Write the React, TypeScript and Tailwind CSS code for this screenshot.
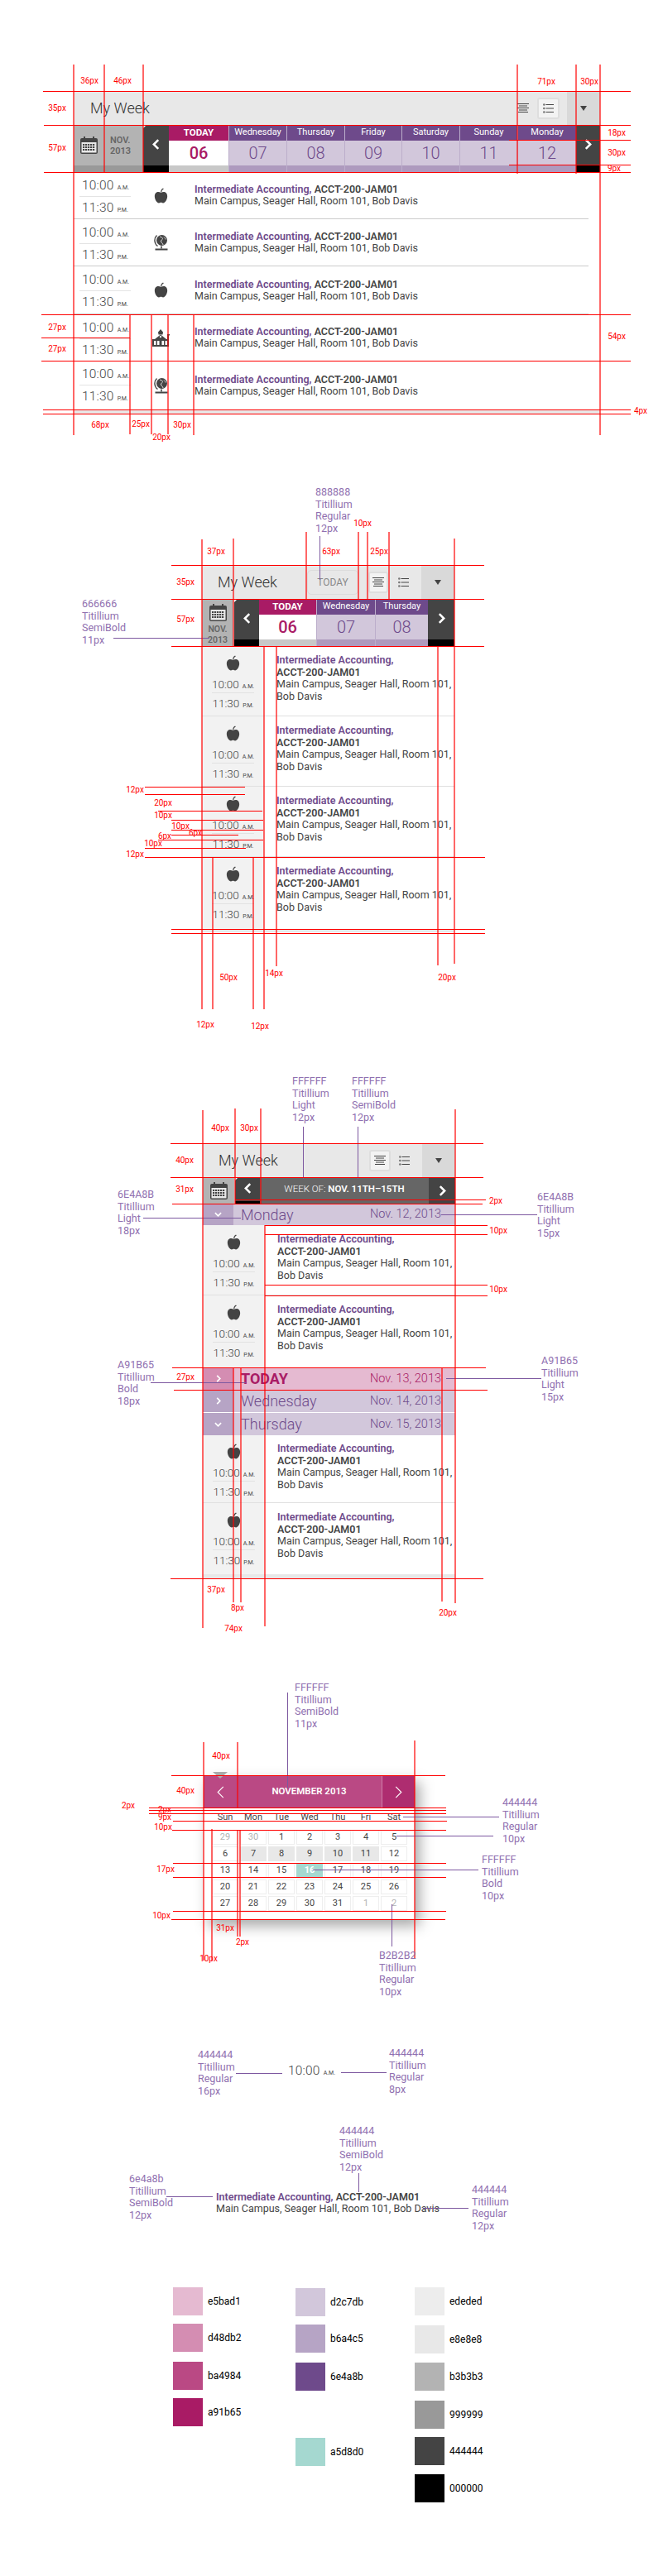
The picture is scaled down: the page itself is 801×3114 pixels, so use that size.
import React from 'react';

const D = '#444444';

function Apple() {
  return (
    <svg width="17" height="19" viewBox="0 0 20 22" fill={D}>
      <path d="M10 7C7 4.5 1 5 1 12c0 5 3.5 9.6 6 9.6 1.5 0 2-.8 3-.8s1.500.8 3 .8c2.500 0 6-4.600 6-9.600 0-7-6-7.500-9-5z" />
      <path d="M9.600 6.200C9.500 3.500 10.800 1.300 13 .3l.9 1.200C12 2.500 11 4 10.900 6.200z" />
    </svg>
  );
}
function Globe() {
  return (
    <svg width="18" height="20" viewBox="0 0 18 20" fill="none">
      <circle cx="9.500" cy="7.500" r="6.500" fill={D} />
      <path d="M7 3c1.500 1 3.500.8 3.500 2.500S8 7 8.500 9 11 11 11 13M12 3.500c1 1 2 2 2 3" stroke="#ddd" strokeWidth="1" />
      <path d="M3.500 1.500a8.500 8.500 0 0 0 1 13" stroke={D} strokeWidth="1.400" />
      <path d="M9 14.500v3" stroke={D} strokeWidth="1.600" />
      <rect x="1.500" y="17.500" width="15" height="2" fill={D} />
    </svg>
  );
}
function School() {
  return (
    <svg width="21" height="21" viewBox="0 0 21 21" fill={D}>
      <path d="M10 0l3 3.500-.5 3h-5L7 3.500z" />
      <path d="M10 6.500l7 5.500H3z" />
      <rect x="0" y="12" width="20" height="9" />
      <rect x="18" y="6" width="2" height="6" />
      <rect x="18" y="6" width="3" height="1.500" />
      <rect x="2" y="14" width="2.500" height="5" fill="#fff" />
      <rect x="6" y="14" width="2.500" height="5" fill="#fff" />
      <rect x="11.500" y="14" width="2.500" height="5" fill="#fff" />
      <rect x="15.500" y="14" width="2.500" height="5" fill="#fff" />
      <circle cx="10" cy="9" r="1.200" fill="#fff" />
    </svg>
  );
}
function CalendarIcon() {
  return (
    <svg width="21" height="21" viewBox="0 0 21 21">
      <rect x="0" y="2" width="21" height="19" rx="2" fill={D} />
      <rect x="1.500" y="7" width="18" height="12.500" fill="#e8e8e8" />
      <rect x="4" y="0" width="2" height="4.500" fill={D} />
      <rect x="15" y="0" width="2" height="4.500" fill={D} />
      {[9, 12, 15].map((y) =>
        [3, 6, 9, 12, 15].map((x) => <rect key={`${x}-${y}`} x={x} y={y} width="2.200" height="2" fill={D} />),
      )}
    </svg>
  );
}
function AlignIcon() {
  return (
    <svg width="14" height="12" viewBox="0 0 14 12" stroke={D} strokeWidth="1">
      <path d="M0 .5h14M2 3h10M0 5.500h14M2 8h10M1 10.500h12" />
    </svg>
  );
}
function ListIcon() {
  return (
    <svg width="13" height="12" viewBox="0 0 13 12">
      <path d="M3.500 1.500H13M3.500 6H13M3.500 10.500H13" stroke={D} strokeWidth="1" />
      <circle cx="1.300" cy="1.500" r="1.300" fill="#777" />
      <circle cx="1.300" cy="6" r="1.300" fill="#777" />
      <circle cx="1.300" cy="10.500" r="1.300" fill="#777" />
    </svg>
  );
}
function Caret() {
  return (
    <svg width="8" height="6" viewBox="0 0 8 6" fill={D}>
      <path d="M0 0h8L4 6z" />
    </svg>
  );
}
function Chevron({ dir, small, thin, color = '#fff' }: { dir: 'l' | 'r' | 'd'; small?: boolean; thin?: boolean; color?: string }) {
  const p = dir === 'l' ? 'M8 1L2 7l6 6' : dir === 'r' ? 'M2 1l6 6-6 6' : 'M1 2l6 6 6-6';
  const w = thin ? 11 : small ? (dir === 'd' ? 9 : 6) : 9;
  const h = thin ? 17 : small ? (dir === 'd' ? 6 : 9) : 13;
  const vb = dir === 'd' ? '0 0 14 10' : '0 0 10 14';
  return (
    <svg width={w} height={h} viewBox={vb} fill="none" stroke={color} strokeWidth={thin ? 1 : 2.800}>
      <path d={p} />
    </svg>
  );
}

function TimeText({ t, s, small }: { t: string; s: string; small?: boolean }) {
  return (
    <span className="whitespace-nowrap text-[#444444]">
      <span className={small ? 'text-[13.500px] font-light' : 'text-[15.500px] font-light tracking-[0.200px]'}>{t}</span>
      <span className="ml-[4px] text-[7px]">{s}</span>
    </span>
  );
}

function DropBtn() {
  return (
    <div className="flex h-full w-[40px] items-center justify-center bg-[#d9d9d9]">
      <Caret />
    </div>
  );
}
function IconButton({ children }: { children: React.ReactNode }) {
  return (
    <div className="flex h-[26px] w-full items-center justify-center rounded-[3px] border-2 border-[#dedede] bg-[#f3f3f3]">
      {children}
    </div>
  );
}
function NavChev({ dir, w, bar }: { dir: 'l' | 'r'; w: string; bar: string }) {
  return (
    <div className={`relative flex flex-col bg-[#444444] ${w}`}>
      {dir === 'l' && <div className="absolute left-0 top-0 border-r-[4px] border-t-[4px] border-r-transparent border-t-white" />}
      <div className="flex flex-1 items-center justify-center pb-[2px]">
        <Chevron dir={dir} />
      </div>
      <div className={`bg-black ${bar}`} />
    </div>
  );
}
function Tab({ name, n, today, w }: { name: string; n: string; today?: boolean; w: string }) {
  if (today) {
    return (
      <div className={`flex flex-col ${w}`}>
        <div className="flex h-[19px] items-center justify-center bg-[#a91b65] text-[11.500px] font-bold text-white">TODAY</div>
        <div className="flex h-[30px] items-center justify-center bg-white text-[20px] font-medium text-[#a91b65]">{n}</div>
        <div className="h-[8px] bg-[#c8c8c8]" />
      </div>
    );
  }
  return (
    <div className={`flex flex-col border-l border-[#bcaecb] ${w}`}>
      <div className="flex h-[19px] items-center justify-center bg-[#6e4a8b] text-[11px] text-white">{name}</div>
      <div className="flex h-[30px] items-center justify-center bg-[#d2c7db] text-[20px] font-light text-[#6e4a8b]">{n}</div>
      <div className="h-[8px] bg-[#ae9abe]" />
    </div>
  );
}
function CourseWide() {
  return (
    <div className="text-[12.500px] leading-[14px] text-[#444444]">
      <div>
        <span className="font-semibold text-[#6e4a8b]">Intermediate Accounting,</span> <span className="font-semibold">ACCT-200-JAM01</span>
      </div>
      <div>Main Campus, Seager Hall, Room 101, Bob Davis</div>
    </div>
  );
}
function WideRow({ icon, h, line }: { icon: React.ReactNode; h: string; line?: boolean }) {
  return (
    <div className={`mr-[14px] flex ${h} ${line ? 'border-b border-[#cccccc]' : ''}`}>
      <div className="ml-[7px] w-[62px]">
        <div className="flex h-[30px] items-center border-b border-[#e4e4e4] pl-[3px] pt-[3px]">
          <TimeText t="10:00" s="A.M." />
        </div>
        <div className="flex h-[27px] items-center pl-[3px]">
          <TimeText t="11:30" s="P.M." />
        </div>
      </div>
      <div className="ml-[26px] flex w-[21px] items-center justify-center">{icon}</div>
      <div className="ml-[30px] flex items-center">
        <CourseWide />
      </div>
    </div>
  );
}
function NarrowRow({ h, top = 'pt-[10px]', line = true }: { h: string; top?: string; line?: boolean }) {
  return (
    <div className={`flex ${h} ${line ? 'border-b border-[#e0e0e0]' : ''}`}>
      <div className={`flex w-[75px] flex-col items-center bg-[#f2f2f2] ${top}`}>
        <div className="flex h-[20px] items-center">
          <Apple />
        </div>
        <div className="mt-[6px] flex h-[21px] w-[51px] items-center justify-center border-b border-[#e2e2e2]">
          <TimeText t="10:00" s="A.M." small />
        </div>
        <div className="flex h-[23px] items-center">
          <TimeText t="11:30" s="P.M." small />
        </div>
      </div>
      <div className={`pl-[15px] text-[12.500px] leading-[14.500px] text-[#444444] ${top}`}>
        <div className="font-semibold text-[#6e4a8b]">Intermediate Accounting,</div>
        <div className="font-semibold">ACCT-200-JAM01</div>
        <div>Main Campus, Seager Hall, Room 101,</div>
        <div>Bob Davis</div>
      </div>
    </div>
  );
}
function Band({ kind, dir, title, date }: { kind: 'p' | 't'; dir: 'r' | 'd'; title: string; date: string }) {
  const t = kind === 't';
  return (
    <div className={`flex h-full items-center ${t ? 'bg-[#e5bad1]' : 'bg-[#d2c7db]'}`}>
      <div className={`flex h-full w-[37px] items-center justify-center ${t ? 'bg-[#d48db2]' : 'bg-[#b6a4c5]'}`}>
        <Chevron dir={dir} small />
      </div>
      <div className={`ml-[9px] flex-1 text-[18px] ${t ? 'font-bold text-[#a91b65]' : 'font-light text-[#6e4a8b]'}`}>{title}</div>
      <div className={`mr-[17px] text-[14.500px] font-light ${t ? 'text-[#a91b65]' : 'text-[#6e4a8b]'}`}>{date}</div>
    </div>
  );
}

function MockOne() {
  const tabs: [string, string, string][] = [
    ['Wednesday', '07', 'w-[70px]'],
    ['Thursday', '08', 'w-[70px]'],
    ['Friday', '09', 'w-[69px]'],
    ['Saturday', '10', 'w-[70px]'],
    ['Sunday', '11', 'w-[70px]'],
    ['Monday', '12', 'w-[71px]'],
  ];
  return (
    <section className="ml-[89px] mt-[110px] w-[636px]">
      <div className="flex h-[41px] items-center bg-[#e8e8e8]">
        <div className="flex-1 pl-[20px] text-[18px] font-light text-[#333333]">My Week</div>
        <div className="flex w-[34px] justify-center">
          <AlignIcon />
        </div>
        <div className="w-[27px]">
          <IconButton>
            <ListIcon />
          </IconButton>
        </div>
        <div className="ml-[9px] h-full">
          <DropBtn />
        </div>
      </div>
      <div className="flex h-[57px]">
        <div className="flex w-[84px] flex-col bg-[#b3b3b3]">
          <div className="flex flex-1 items-center pl-[8px]">
            <CalendarIcon />
            <div className="ml-[15px] text-[11px] font-semibold leading-[13px] text-[#666666]">
              NOV.
              <br />
              2013
            </div>
          </div>
          <div className="h-[8px] bg-[#999999]" />
        </div>
        <NavChev dir="l" w="w-[31px]" bar="h-[8px]" />
        <Tab name="TODAY" n="06" today w="w-[72px]" />
        {tabs.map(([a, b, c]) => (
          <Tab key={a} name={a} n={b} w={c} />
        ))}
        <NavChev dir="r" w="w-[29px]" bar="h-[8px]" />
      </div>
      <WideRow icon={<Apple />} h="h-[57px]" line />
      <WideRow icon={<Globe />} h="h-[57px]" line />
      <WideRow icon={<Apple />} h="h-[58px]" line />
      <WideRow icon={<School />} h="h-[56px]" />
      <WideRow icon={<Globe />} h="h-[59px]" />
      <div className="h-[5px] bg-[#e8e8e8]" />
    </section>
  );
}

function MockTwo() {
  return (
    <section className="ml-[244px] mt-[183px] w-[305px]">
      <div className="flex h-[41px] items-center bg-[#e8e8e8]">
        <div className="flex-1 pl-[19px] text-[18px] font-light text-[#333333]">My Week</div>
        <div className="flex h-[30px] w-[62px] items-center justify-center rounded-[5px] border border-[#dcdcdc] text-[12px] text-[#888888]">TODAY</div>
        <div className="ml-[12px] w-[24px]">
          <IconButton>
            <AlignIcon />
          </IconButton>
        </div>
        <div className="mr-[4px] flex w-[36px] justify-center">
          <ListIcon />
        </div>
        <div className="h-full">
          <DropBtn />
        </div>
      </div>
      <div className="flex h-[57px]">
        <div className="flex w-[38px] flex-col items-center bg-[#b3b3b3] pt-[6px]">
          <CalendarIcon />
          <div className="mt-[3px] text-center text-[10.500px] font-semibold leading-[13px] text-[#666666]">
            NOV.
            <br />
            2013
          </div>
        </div>
        <div className="w-[1px]" />
        <NavChev dir="l" w="w-[30px]" bar="h-[8px]" />
        <Tab name="TODAY" n="06" today w="w-[69px]" />
        <Tab name="Wednesday" n="07" w="w-[71px]" />
        <Tab name="Thursday" n="08" w="w-[64px]" />
        <NavChev dir="r" w="w-[32px]" bar="h-[8px]" />
      </div>
      <NarrowRow h="h-[85px]" />
      <NarrowRow h="h-[85px]" />
      <NarrowRow h="h-[85px]" />
      <NarrowRow h="h-[87px]" line={false} />
      <div className="h-[4px] bg-[#e8e8e8]" />
    </section>
  );
}

function MockThree() {
  return (
    <section className="ml-[245px] mt-[255px] w-[305px]">
      <div className="flex h-[41px] items-center bg-[#e8e8e8]">
        <div className="flex-1 pl-[19px] text-[18px] font-light text-[#333333]">My Week</div>
        <div className="w-[26px]">
          <IconButton>
            <AlignIcon />
          </IconButton>
        </div>
        <div className="mr-[6px] flex w-[32px] justify-center">
          <ListIcon />
        </div>
        <div className="h-full">
          <DropBtn />
        </div>
      </div>
      <div className="flex h-[32px]">
        <div className="flex w-[38px] items-center justify-center bg-[#b3b3b3]">
          <CalendarIcon />
        </div>
        <div className="w-[1px]" />
        <NavChev dir="l" w="w-[30px]" bar="h-[3px]" />
        <div className="flex flex-1 items-center justify-center bg-[#666666] pb-[2px] text-[11.500px] font-light text-white">
          WEEK OF:&nbsp;<span className="font-semibold">NOV. 11TH–15TH</span>
        </div>
        <div className="flex w-[32px] items-center justify-center bg-[#444444]">
          <Chevron dir="r" />
        </div>
      </div>
      <div className="h-[26px]">
        <Band kind="p" dir="d" title="Monday" date="Nov. 12, 2013" />
      </div>
      <NarrowRow h="h-[85px]" />
      <NarrowRow h="h-[87px]" line={false} />
      <div className="h-[27px]">
        <Band kind="t" dir="r" title="TODAY" date="Nov. 13, 2013" />
      </div>
      <div className="h-[27px]">
        <Band kind="p" dir="r" title="Wednesday" date="Nov. 14, 2013" />
      </div>
      <div className="mt-[1px] h-[27px]">
        <Band kind="p" dir="d" title="Thursday" date="Nov. 15, 2013" />
      </div>
      <NarrowRow h="h-[82px]" top="pt-[9px]" />
      <NarrowRow h="h-[86px]" line={false} />
      <div className="h-[5px] bg-[#e8e8e8]" />
    </section>
  );
}

function Calendar() {
  const days: [string, string][] = [
    ['29', 'o'], ['30', 'o'], ['1', ''], ['2', ''], ['3', ''], ['4', ''], ['5', ''],
    ['6', ''], ['7', 'g'], ['8', 'g'], ['9', 'g'], ['10', 'g'], ['11', 'g'], ['12', ''],
    ['13', ''], ['14', ''], ['15', ''], ['16', 't'], ['17', ''], ['18', ''], ['19', ''],
    ['20', ''], ['21', ''], ['22', ''], ['23', ''], ['24', ''], ['25', ''], ['26', ''],
    ['27', ''], ['28', ''], ['29', ''], ['30', ''], ['31', ''], ['1', 'o'], ['2', 'o'],
  ];
  const style: Record<string, string> = {
    '': 'border border-[#eeeeee] text-[#444444]',
    o: 'border border-[#eeeeee] text-[#b2b2b2]',
    g: 'bg-[#e8e8e8] text-[#444444]',
    t: 'bg-[#a5d8d0] font-bold text-white',
  };
  return (
    <section className="relative ml-[246px] mt-[238px] h-[174px] w-[255px] bg-white shadow-[6px_8px_16px_rgba(0,0,0,0.35)]">
      <div className="absolute left-[11px] top-[-4px] border-x-[9px] border-t-[8px] border-x-transparent border-t-[#aaaaaa]" />
      <div className="flex h-[40px]">
        <div className="flex w-[40px] items-center justify-center bg-[#ba4984]">
          <Chevron dir="l" thin />
        </div>
        <div className="flex flex-1 items-center justify-center border-r border-[#cf7ca9] bg-[#ba4984] text-[11.500px] font-semibold text-white">NOVEMBER 2013</div>
        <div className="flex w-[39px] items-center justify-center bg-[#ae2d70]">
          <Chevron dir="r" thin />
        </div>
      </div>
      <div className="grid grid-cols-[repeat(7,32px)] gap-x-[2px] pl-[10px] pt-[6px] text-center text-[11px] leading-[10px] text-[#444444]">
        {['Sun', 'Mon', 'Tue', 'Wed', 'Thu', 'Fri', 'Sat'].map((d) => (
          <div key={d}>{d}</div>
        ))}
      </div>
      <div className="mt-[10px] grid grid-cols-[repeat(7,32px)] auto-rows-[18px] gap-[2px] pl-[10px] text-[11px]">
        {days.map(([d, k], i) => (
          <div key={i} className={`flex items-center justify-center ${style[k]}`}>
            {d}
          </div>
        ))}
      </div>
    </section>
  );
}

const swatches: { bg: string; label: string; mt: string }[][] = [
  [
    { bg: 'bg-[#e5bad1]', label: 'e5bad1', mt: 'mt-0' },
    { bg: 'bg-[#d48db2]', label: 'd48db2', mt: 'mt-[10px]' },
    { bg: 'bg-[#ba4984]', label: 'ba4984', mt: 'mt-[12px]' },
    { bg: 'bg-[#a91b65]', label: 'a91b65', mt: 'mt-[10px]' },
  ],
  [
    { bg: 'bg-[#d2c7db]', label: 'd2c7db', mt: 'mt-[1px]' },
    { bg: 'bg-[#b6a4c5]', label: 'b6a4c5', mt: 'mt-[10px]' },
    { bg: 'bg-[#6e4a8b]', label: '6e4a8b', mt: 'mt-[12px]' },
    { bg: 'bg-[#a5d8d0]', label: 'a5d8d0', mt: 'mt-[57px]' },
  ],
  [
    { bg: 'bg-[#ededed]', label: 'ededed', mt: 'mt-0' },
    { bg: 'bg-[#e8e8e8]', label: 'e8e8e8', mt: 'mt-[12px]' },
    { bg: 'bg-[#b3b3b3]', label: 'b3b3b3', mt: 'mt-[11px]' },
    { bg: 'bg-[#999999]', label: '999999', mt: 'mt-[12px]' },
    { bg: 'bg-[#444444]', label: '444444', mt: 'mt-[10px]' },
    { bg: 'bg-[#000000]', label: '000000', mt: 'mt-[11px]' },
  ],
];

type L = [number, number, number];
const hLines: L[] = [
  [110, 52, 762], [151, 53, 762], [208, 53, 762], [169, 615, 762], [199, 615, 762],
  [380, 50, 762], [408, 50, 157], [436, 50, 762], [495, 52, 762], [500, 52, 762],
  [683, 207, 585], [724, 207, 585], [781, 207, 585],
  [951, 175, 296], [960, 175, 296], [980, 191, 317], [991, 207, 318], [1003, 207, 318], [1009, 207, 288], [1015, 191, 318], [1025, 175, 297], [1036, 175, 586],
  [1123, 207, 586], [1128, 207, 586],
  [1382, 206, 584], [1423, 206, 584], [1455, 208, 583], [1450, 284, 587], [1481, 320, 589], [1492, 320, 589],
  [1553, 320, 589], [1566, 320, 589], [1653, 208, 587], [1680, 210, 589], [1908, 206, 584],
  [2146, 207, 538], [2185, 180, 539], [2188, 180, 539], [2192, 180, 539], [2201, 209, 540], [2212, 208, 539], [2252, 209, 539], [2269, 209, 539], [2310, 209, 539], [2320, 207, 538],
];
const vLines: L[] = [
  [89, 78, 526], [126, 78, 208], [173, 78, 208], [625, 78, 210], [696, 78, 210], [725, 78, 526],
  [157, 380, 525], [183, 380, 525], [203, 380, 525], [234, 380, 526],
  [244, 652, 1220], [282, 651, 781], [370, 643, 724], [433, 643, 724], [444, 643, 724], [470, 643, 724], [549, 651, 1165],
  [319, 781, 1220], [334, 781, 1168], [529, 781, 1167], [257, 1036, 1220], [306, 1036, 1220],
  [245, 1342, 1968], [284, 1340, 1455], [315, 1340, 1455], [550, 1341, 1938], [320, 1481, 1966],
  [282, 1653, 1937], [291, 1653, 1937], [534, 1653, 1936],
  [246, 2106, 2370], [287, 2106, 2186], [256, 2211, 2370], [287, 2212, 2341], [290, 2212, 2341], [501, 2104, 2368],
];
const redLabels: [string, number, number][] = [
  ['36px', 108, 98], ['46px', 148, 98], ['71px', 660, 99], ['30px', 712, 99], ['35px', 69, 131], ['57px', 69, 179],
  ['18px', 745, 161], ['30px', 745, 185], ['9px', 742, 204], ['27px', 69, 396], ['27px', 69, 422], ['54px', 745, 407], ['4px', 774, 497],
  ['68px', 121, 514], ['25px', 170, 513], ['20px', 195, 529], ['30px', 220, 514],
  ['37px', 261, 667], ['63px', 400, 667], ['10px', 438, 633], ['25px', 458, 667], ['35px', 224, 704], ['57px', 224, 749],
  ['12px', 163, 955], ['20px', 197, 971], ['10px', 197, 986], ['10px', 218, 999], ['6px', 236, 1007], ['6px', 199, 1011], ['10px', 185, 1020], ['12px', 163, 1033],
  ['50px', 276, 1182], ['14px', 331, 1177], ['20px', 540, 1182], ['12px', 248, 1239], ['12px', 314, 1241],
  ['40px', 266, 1364], ['30px', 301, 1364], ['40px', 223, 1403], ['31px', 223, 1438], ['2px', 599, 1452], ['10px', 602, 1488], ['10px', 602, 1559],
  ['27px', 224, 1665], ['37px', 261, 1922], ['8px', 287, 1944], ['74px', 282, 1969], ['20px', 541, 1950],
  ['40px', 267, 2123], ['40px', 224, 2165], ['2px', 155, 2183], ['2px', 199, 2188], ['9px', 199, 2197], ['10px', 197, 2209], ['17px', 200, 2260], ['10px', 195, 2316], ['31px', 272, 2331], ['2px', 293, 2348], ['10px', 252, 2368],
];
const notes: [string[], number, number][] = [
  [['888888', 'Titillium', 'Regular', '12px'], 381, 595],
  [['666666', 'Titillium', 'SemiBold', '11px'], 99, 730],
  [['FFFFFF', 'Titillium', 'Light', '12px'], 353, 1307],
  [['FFFFFF', 'Titillium', 'SemiBold', '12px'], 425, 1307],
  [['6E4A8B', 'Titillium', 'Light', '18px'], 142, 1444],
  [['6E4A8B', 'Titillium', 'Light', '15px'], 649, 1447],
  [['A91B65', 'Titillium', 'Bold', '18px'], 142, 1650],
  [['A91B65', 'Titillium', 'Light', '15px'], 654, 1645],
  [['FFFFFF', 'Titillium', 'SemiBold', '11px'], 356, 2040],
  [['444444', 'Titillium', 'Regular', '10px'], 607, 2179],
  [['FFFFFF', 'Titillium', 'Bold', '10px'], 582, 2248],
  [['B2B2B2', 'Titillium', 'Regular', '10px'], 458, 2364],
  [['444444', 'Titillium', 'Regular', '16px'], 239, 2484],
  [['444444', 'Titillium', 'Regular', '8px'], 470, 2482],
  [['444444', 'Titillium', 'SemiBold', '12px'], 410, 2576],
  [['6e4a8b', 'Titillium', 'SemiBold', '12px'], 156, 2634],
  [['444444', 'Titillium', 'Regular', '12px'], 570, 2647],
];
const pH: L[] = [
  [771, 137, 253], [1472, 173, 291], [1468, 533, 649], [1671, 182, 297], [1666, 539, 654],
  [2196, 487, 603], [2219, 479, 596], [2260, 378, 578], [2506, 285, 341], [2505, 412, 467], [2655, 201, 257], [2669, 511, 566],
];
const pV: L[] = [
  [386, 648, 701], [366, 1362, 1425], [432, 1362, 1425], [347, 2046, 2162], [473, 2302, 2353], [433, 2627, 2650],
];

function Overlay() {
  return (
    <>
      {pH.map(([y, a, b], i) => (
        <div key={`ph${i}`} className="absolute h-[1px] bg-[#7d58a0]" style={{ top: y, left: a, width: b - a }} />
      ))}
      {pV.map(([x, a, b], i) => (
        <div key={`pv${i}`} className="absolute w-[1px] bg-[#7d58a0]" style={{ left: x, top: a, height: b - a }} />
      ))}
      {hLines.map(([y, a, b], i) => (
        <div key={`h${i}`} className="absolute h-[1px] bg-[#ff0000]" style={{ top: y, left: a, width: b - a }} />
      ))}
      {vLines.map(([x, a, b], i) => (
        <div key={`v${i}`} className="absolute w-[2px] bg-[#ff0000]/60" style={{ left: x - 1, top: a, height: b - a }} />
      ))}
      {redLabels.map(([t, x, y], i) => (
        <div key={`r${i}`} className="absolute -translate-x-1/2 -translate-y-1/2 whitespace-nowrap text-[10px] leading-none text-[#ff0000]" style={{ left: x, top: y }}>
          {t}
        </div>
      ))}
      {notes.map(([lines, x, y], i) => (
        <div key={`n${i}`} className="absolute text-[12.500px] leading-[14.500px] text-[#9070b0]" style={{ left: x, top: y - 7 }}>
          {lines.map((l, j) => (
            <div key={j}>{l}</div>
          ))}
        </div>
      ))}
    </>
  );
}

export default function App() {
  return (
    <div className="relative h-[3114px] w-[801px] overflow-hidden bg-white font-['Roboto',sans-serif]">
      <MockOne />
      <MockTwo />
      <MockThree />
      <Calendar />
      <div className="ml-[348px] mt-[173px] flex h-[20px] items-center">
        <TimeText t="10:00" s="A.M." />
      </div>
      <div className="ml-[261px] mt-[136px]">
        <CourseWide />
      </div>
      <div className="ml-[209px] mt-[88px] flex">
        {swatches.map((col, c) => (
          <div key={c} className={c === 0 ? 'w-[148px]' : 'w-[144px]'}>
            {col.map((s) => (
              <div key={s.label} className={`flex h-[34px] items-center ${s.mt}`}>
                <div className={`h-[34px] w-[36px] ${s.bg}`} />
                <div className="ml-[6px] text-[12px] text-black">{s.label}</div>
              </div>
            ))}
          </div>
        ))}
      </div>
      <Overlay />
    </div>
  );
}
